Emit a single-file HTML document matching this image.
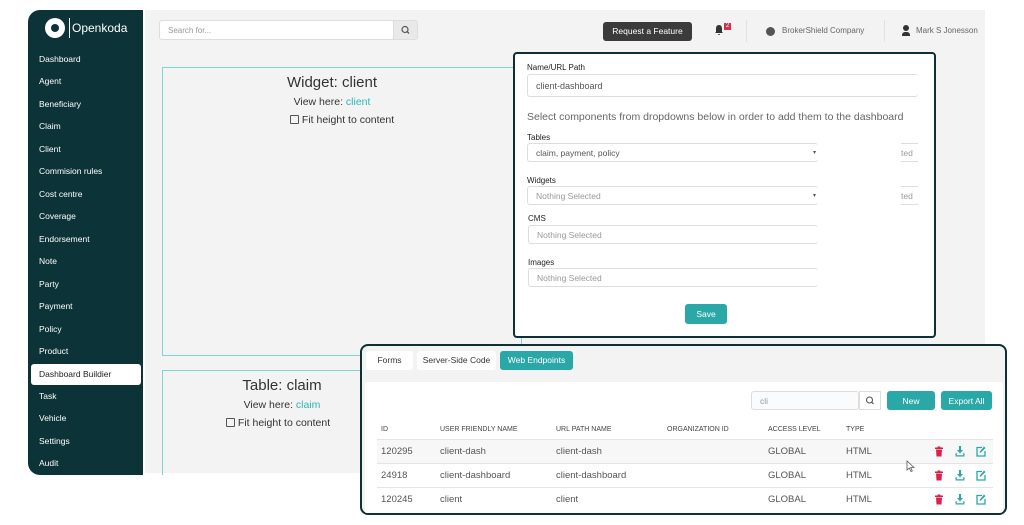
<!DOCTYPE html>
<html><head><meta charset="utf-8"><style>
*{box-sizing:border-box;margin:0;padding:0}
body{width:1024px;height:525px;background:#fff;font-family:"Liberation Sans",sans-serif;position:relative;overflow:hidden;color:#333}
.abs{position:absolute}
#side{left:28px;top:10px;width:115px;height:465px;background:#0b3338;border-radius:12px 0 0 12px}
#side .it{position:absolute;left:11px;font-size:8.5px;color:#fff}
#main{left:145px;top:10px;width:840px;height:463px;background:#f3f3f4}
.inp{position:absolute;background:#fff;border:1px solid #ddd;border-radius:3px;font-size:9px;color:#555;padding-left:8px;display:flex;align-items:center}
.lbl{position:absolute;font-size:8px;color:#222}
.ph{color:#999}
.btn{position:absolute;background:#2aa8a8;color:#fff;font-size:8.5px;border-radius:3px;display:flex;align-items:center;justify-content:center}
.row{position:absolute;left:15px;width:616px;height:24px;border-top:1px solid #e4e4e4;font-size:9.5px;color:#555}
.row span{position:absolute;top:6px}
.row svg{position:absolute;top:6px}
</style></head><body>
<div id="side" class="abs">
 <div class="abs" style="left:17px;top:8px;width:20px;height:20px;border-radius:50%;background:#fff"></div>
 <div class="abs" style="left:23px;top:14px;width:8px;height:8px;border-radius:50%;background:#0b3338"></div>
 <div class="abs" style="left:41px;top:8px;width:1px;height:20px;background:#fff"></div>
 <div class="abs" style="left:44px;top:11px;color:#fff;font-size:12px">Openkoda</div>
 <div class="it" style="top:44px">Dashboard</div>
 <div class="it" style="top:66px">Agent</div>
 <div class="it" style="top:89px">Beneficiary</div>
 <div class="it" style="top:111px">Claim</div>
 <div class="it" style="top:134px">Client</div>
 <div class="it" style="top:156px">Commision rules</div>
 <div class="it" style="top:179px">Cost centre</div>
 <div class="it" style="top:201px">Coverage</div>
 <div class="it" style="top:224px">Endorsement</div>
 <div class="it" style="top:246px">Note</div>
 <div class="it" style="top:269px">Party</div>
 <div class="it" style="top:291px">Payment</div>
 <div class="it" style="top:314px">Policy</div>
 <div class="it" style="top:336px">Product</div>
 <div class="abs" style="left:3px;top:354px;width:110px;height:21px;background:#fff;border-radius:3px"></div>
 <div class="it" style="top:359px;color:#222">Dashboard Buildier</div>
 <div class="it" style="top:381px">Task</div>
 <div class="it" style="top:403px">Vehicle</div>
 <div class="it" style="top:426px">Settings</div>
 <div class="it" style="top:448px">Audit</div>
</div>
<div id="main" class="abs"></div>
<div class="inp" style="left:159px;top:20px;width:235px;height:20px;font-size:8px"><span class="ph">Search for...</span></div>
<div class="abs" style="left:393px;top:20px;width:25px;height:20px;background:#e9e9e9;border:1px solid #ddd;border-radius:0 3px 3px 0">
<svg width="23" height="18" viewBox="0 0 23 18"><circle cx="11" cy="8.5" r="3" fill="none" stroke="#555" stroke-width="1.2"/><path d="M13.2 10.7 15 12.5" stroke="#555" stroke-width="1.3"/></svg></div>
<div class="abs" style="left:603px;top:22px;width:89px;height:19px;background:#3b3b3b;color:#fff;font-size:8.5px;border-radius:3px;text-align:center;line-height:19px">Request a Feature</div>
<svg class="abs" style="left:714px;top:24px" width="10" height="12" viewBox="0 0 10 12"><path d="M5 1C2.5 1 2 3 2 5v3L1 9h8L8 8V5C8 3 7.5 1 5 1z M4 10h2a1 1 0 0 1-2 0z" fill="#333"/></svg>
<div class="abs" style="left:724px;top:23px;width:7px;height:7px;background:#d0334d;color:#fff;font-size:6px;text-align:center;line-height:7px">2</div>
<div class="abs" style="left:746px;top:20px;width:1px;height:22px;background:#e2e2e2"></div>
<div class="abs" style="left:766px;top:27px;width:9px;height:9px;border-radius:50%;background:#555"></div>
<div class="abs" style="left:782px;top:26px;font-size:8px;color:#666">BrokerShield Company</div>
<div class="abs" style="left:884px;top:20px;width:1px;height:22px;background:#e2e2e2"></div>
<div class="abs" style="left:902px;top:25px;width:8px;height:11px;"><div style="width:6px;height:6px;border-radius:50%;background:#333;margin-left:1px"></div><div style="width:8px;height:4px;background:#333;border-radius:3px 3px 0 0;margin-top:1px"></div></div>
<div class="abs" style="left:916px;top:26px;font-size:8px;color:#666">Mark S Jonesson</div>

<div class="abs" style="left:162px;top:67px;width:360px;height:289px;border:1px solid #7fd4d4"></div>
<div class="abs" style="left:162px;top:74px;width:340px;text-align:center;font-size:15px;color:#333">Widget: client</div>
<div class="abs" style="left:162px;top:96px;width:340px;text-align:center;font-size:10.5px">View here: <span style="color:#2cb8b8">client</span></div>
<div class="abs" style="left:290px;top:114px;font-size:10.5px"><span style="display:inline-block;width:9px;height:9px;border:1px solid #555;border-radius:1px;vertical-align:-1px"></span> Fit height to content</div>

<div class="abs" style="left:162px;top:370px;width:210px;height:105px;border:1px solid #7fd4d4;border-bottom:none"></div>
<div class="abs" style="left:162px;top:377px;width:240px;text-align:center;font-size:15px">Table: claim</div>
<div class="abs" style="left:162px;top:399px;width:240px;text-align:center;font-size:10.5px">View here: <span style="color:#2cb8b8">claim</span></div>
<div class="abs" style="left:226px;top:417px;font-size:10.5px"><span style="display:inline-block;width:9px;height:9px;border:1px solid #555;border-radius:1px;vertical-align:-1px"></span> Fit height to content</div>

<div class="abs" style="left:513px;top:52px;width:423px;height:286px;background:#fff;border:2px solid #0e2f33;border-radius:4px"></div>
<div class="lbl" style="left:527px;top:63px">Name/URL Path</div>
<div class="inp" style="left:527px;top:74px;width:391px;height:23px;border-right:none">client-dashboard</div>
<div class="abs" style="left:527px;top:111px;font-size:10.5px;color:#666">Select components from dropdowns below in order to add them to the dashboard</div>
<div class="lbl" style="left:527px;top:133px">Tables</div>
<div class="inp" style="left:527px;top:143px;width:291px;height:19px;font-size:8.5px;border-right:none">claim, payment, policy<span style="position:absolute;right:2px;font-size:6px">▾</span></div>
<div class="abs" style="left:901px;top:148px;font-size:8.5px;color:#999">ted</div>
<div class="abs" style="left:901px;top:143px;width:17px;height:19px;border-top:1px solid #ddd;border-bottom:1px solid #ddd"></div>
<div class="lbl" style="left:527px;top:176px">Widgets</div>
<div class="inp" style="left:527px;top:186px;width:291px;height:19px;font-size:8.5px;border-right:none"><span class="ph">Nothing Selected</span><span style="position:absolute;right:2px;font-size:6px">▾</span></div>
<div class="abs" style="left:901px;top:191px;font-size:8.5px;color:#999">ted</div>
<div class="abs" style="left:901px;top:186px;width:17px;height:19px;border-top:1px solid #ddd;border-bottom:1px solid #ddd"></div>
<div class="lbl" style="left:528px;top:214px">CMS</div>
<div class="inp" style="left:528px;top:225px;width:290px;height:19px;font-size:8.5px;border-right:none"><span class="ph">Nothing Selected</span></div>
<div class="lbl" style="left:528px;top:258px">Images</div>
<div class="inp" style="left:528px;top:268px;width:290px;height:19px;font-size:8.5px;border-right:none"><span class="ph">Nothing Selected</span></div>
<div class="btn" style="left:685px;top:304px;width:42px;height:20px">Save</div>

<div class="abs" style="left:360px;top:344px;width:647px;height:171px;background:#f3f3f3;border:2px solid #0e2f33;border-radius:8px;overflow:hidden">
 <div class="abs" style="left:4px;top:5px;width:47px;height:19px;background:#fff;border-radius:3px;font-size:8.5px;text-align:center;line-height:19px">Forms</div>
 <div class="abs" style="left:55px;top:5px;width:79px;height:19px;background:#fff;border-radius:3px;font-size:8.5px;text-align:center;line-height:19px">Server-Side Code</div>
 <div class="abs" style="left:138px;top:5px;width:73px;height:19px;background:#2aa8a8;color:#fff;border-radius:3px;font-size:8.5px;text-align:center;line-height:19px">Web Endpoints</div>
 <div class="abs" style="left:3px;top:36px;width:638px;height:140px;background:#fff;border-radius:3px"></div>
 <div class="inp" style="left:389px;top:45px;width:108px;height:19px;font-size:8.5px;background:#fafbfd"><span class="ph">cli</span></div>
 <div class="abs" style="left:497px;top:45px;width:22px;height:19px;border:1px solid #ddd">
 <svg width="20" height="17" viewBox="0 0 20 17"><circle cx="9.5" cy="8" r="3" fill="none" stroke="#555" stroke-width="1.1"/><path d="M11.7 10.2 13.5 12" stroke="#555" stroke-width="1.2"/></svg></div>
 <div class="btn" style="left:525px;top:45px;width:48px;height:19px">New</div>
 <div class="btn" style="left:579px;top:45px;width:51px;height:19px">Export All</div>
 <div class="abs" style="top:80px;left:19px;font-size:7px;color:#444">ID</div>
 <div class="abs" style="top:80px;left:78px;font-size:7px;color:#444">USER FRIENDLY NAME</div>
 <div class="abs" style="top:80px;left:194px;font-size:7px;color:#444">URL PATH NAME</div>
 <div class="abs" style="top:80px;left:305px;font-size:7px;color:#444">ORGANIZATION ID</div>
 <div class="abs" style="top:80px;left:406px;font-size:7px;color:#444">ACCESS LEVEL</div>
 <div class="abs" style="top:80px;left:484px;font-size:7px;color:#444">TYPE</div>
 <div class="row" style="top:93px;background:#f7f7f7"><span style="left:4px">120295</span><span style="left:63px">client-dash</span><span style="left:179px">client-dash</span><span style="left:391px">GLOBAL</span><span style="left:469px">HTML</span>
 <svg style="left:557px" width="10" height="11" viewBox="0 0 10 11"><path d="M1 1.5h8v1.5H1zM3.5 0.5h3v1h-3zM2 3.5h6l-.5 7h-5z" fill="#d8244c"/></svg>
 <svg style="left:578px" width="10" height="11" viewBox="0 0 10 11"><path d="M4 0h2v4h2L5 7.5 2 4h2z M0.5 7v3.5h9V7h-1.2v2.2H1.7V7z" fill="#2aa8a8"/></svg>
 <svg style="left:599px" width="10" height="11" viewBox="0 0 10 11"><path d="M6 1.5H1v8.5h8V5" fill="none" stroke="#2aa8a8" stroke-width="1.3"/><path d="M8 0.5 9.5 2 5 6.5 3.5 7 4 5.5z" fill="#2aa8a8"/></svg></div>
 <div class="row" style="top:117px"><span style="left:4px">24918</span><span style="left:63px">client-dashboard</span><span style="left:179px">client-dashboard</span><span style="left:391px">GLOBAL</span><span style="left:469px">HTML</span>
 <svg style="left:557px" width="10" height="11" viewBox="0 0 10 11"><path d="M1 1.5h8v1.5H1zM3.5 0.5h3v1h-3zM2 3.5h6l-.5 7h-5z" fill="#d8244c"/></svg>
 <svg style="left:578px" width="10" height="11" viewBox="0 0 10 11"><path d="M4 0h2v4h2L5 7.5 2 4h2z M0.5 7v3.5h9V7h-1.2v2.2H1.7V7z" fill="#2aa8a8"/></svg>
 <svg style="left:599px" width="10" height="11" viewBox="0 0 10 11"><path d="M6 1.5H1v8.5h8V5" fill="none" stroke="#2aa8a8" stroke-width="1.3"/><path d="M8 0.5 9.5 2 5 6.5 3.5 7 4 5.5z" fill="#2aa8a8"/></svg></div>
 <div class="row" style="top:141px"><span style="left:4px">120245</span><span style="left:63px">client</span><span style="left:179px">client</span><span style="left:391px">GLOBAL</span><span style="left:469px">HTML</span>
 <svg style="left:557px" width="10" height="11" viewBox="0 0 10 11"><path d="M1 1.5h8v1.5H1zM3.5 0.5h3v1h-3zM2 3.5h6l-.5 7h-5z" fill="#d8244c"/></svg>
 <svg style="left:578px" width="10" height="11" viewBox="0 0 10 11"><path d="M4 0h2v4h2L5 7.5 2 4h2z M0.5 7v3.5h9V7h-1.2v2.2H1.7V7z" fill="#2aa8a8"/></svg>
 <svg style="left:599px" width="10" height="11" viewBox="0 0 10 11"><path d="M6 1.5H1v8.5h8V5" fill="none" stroke="#2aa8a8" stroke-width="1.3"/><path d="M8 0.5 9.5 2 5 6.5 3.5 7 4 5.5z" fill="#2aa8a8"/></svg></div>
</div>
<svg class="abs" style="left:906px;top:460px" width="9" height="13" viewBox="0 0 9 13"><path d="M1 1v9l2.3-2 1.6 3.5 1.4-.6-1.6-3.4H8z" fill="#fff" stroke="#555" stroke-width=".8"/></svg>
</body></html>
